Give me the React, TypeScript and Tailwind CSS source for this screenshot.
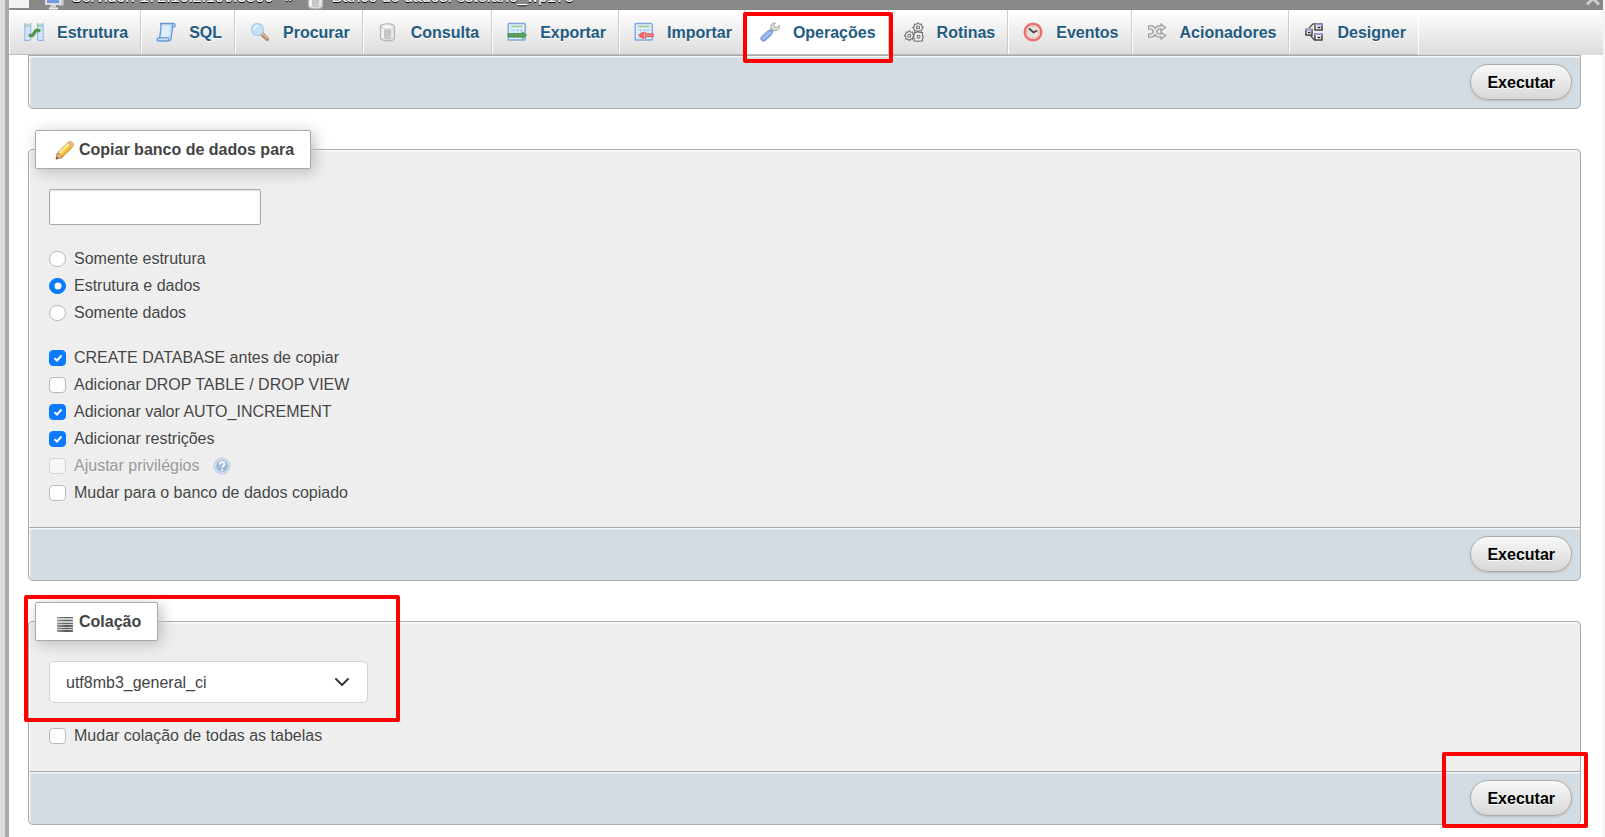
import { useState } from "react";
import type { ReactNode } from "react";

function Svg({ children, className = "h-5 w-5" }: { children: ReactNode; className?: string }) {
  return (
    <svg viewBox="0 0 20 20" className={`shrink-0 ${className}`} fill="none" aria-hidden="true">
      {children}
    </svg>
  );
}

const StructureIcon = () => (
  <Svg>
    <path d="M1 1.5h5.5v17H1zM14 1.5h5v17h-5z" fill="#c3dcf7" />
    <path d="M1 3.5h5M14 3.5h5" stroke="#9fd48e" strokeWidth="1.5" />
    <path d="M1 7h5M1 10h5M1 13h5M1 16h5M14 7h5M14 10h5M14 13h5M14 16h5" stroke="#edf5fd" />
    <path d="M.8 1v18M6.8 1v17M13.6 1v17M19.2 1v18M.8 18.5h5M14 18.5h5" stroke="#8db3e2" />
    <path d="M6 13.5h2.5L12 8.5h3" stroke="#4d9a50" strokeWidth="3.4" strokeLinecap="round" strokeLinejoin="round" />
  </Svg>
);

const SqlIcon = () => (
  <Svg>
    <path d="M4.5 1.5h13c2 0 2.2 3.5.2 3.5h-1l-1.5 10.5c-.3 2.5-1.2 3.5-2.7 3.5h-10c-2 0-1.800-3 0-3.200h1.200L5 4.500z" fill="#c6dff9" stroke="#6b9bd8" strokeWidth="1.3" />
    <path d="M6.500 4h7.500l-1.500 11H5.300z" fill="#dfeefd" />
    <path d="M2.500 15.800h10c0 1.500.4 2.600 1.500 2.600M17.500 1.700c-1.500.3-1.500 2-1 3.300" stroke="#5f8fce" />
  </Svg>
);

const SearchIcon = () => (
  <Svg>
    <path d="M11.500 11.500l5.500 5.500" stroke="#b98a63" strokeWidth="4" strokeLinecap="round" />
    <path d="M12.500 11.700l4.500 4.300" stroke="#e3bd97" strokeWidth="1.5" strokeLinecap="round" />
    <circle cx="7.5" cy="7.5" r="6" fill="#c8e1fb" stroke="#b4cdec" strokeWidth="1.5" />
    <path d="M4 7.500a3.500 3.500 0 0 1 4-3.500" stroke="#eaf4fe" strokeWidth="1.8" />
  </Svg>
);

const DatabaseIcon = () => (
  <Svg>
    <path d="M2.500 5c0-2 3-3.200 7-3.200S16.500 3 16.500 5v10.500c0 2-3 3.300-7 3.300s-7-1.300-7-3.300z" fill="#e6e6e6" stroke="#b4b4b4" strokeWidth="1.3" />
    <path d="M6 7.500h7v9.500c-2 .6-5 .6-7 0z" fill="#c6c6c6" />
    <path d="M4.500 7v9" stroke="#fafafa" strokeWidth="1.6" />
    <ellipse cx="9.5" cy="4.8" rx="6" ry="2.2" fill="#f7f7f7" stroke="#cfcfcf" strokeWidth=".8" />
  </Svg>
);

const Sheet = () => (
  <>
    <rect x="1.2" y="1.5" width="17" height="16.5" rx="1" fill="#e4effc" stroke="#80a5dc" strokeWidth="1.4" />
    <path d="M4 4.500h11.500" stroke="#8fce83" strokeWidth="1.5" />
    <path d="M3.500 8h12.500M3.500 12h12.500M3.500 15.500h12.500M6.500 7v9.500M10.500 7v9.500M14 7v9.500" stroke="#b3cdec" />
  </>
);

const ExportIcon = () => (
  <Svg>
    <Sheet />
    <path d="M1 11.500h14.500V9.800l4.300 3.500-4.300 3.500v-1.700H1z" fill="#57a055" stroke="#3c8540" strokeWidth=".6" />
  </Svg>
);

const ImportIcon = () => (
  <Svg>
    <Sheet />
    <path d="M20 11.200h-8V10H8.500L4 13.200l4.500 3.500H12v-1.600h8z" fill="#f05c5c" />
    <path d="M8 13.200h12" stroke="#f99b9b" />
    <path d="M10.500 10v6.500" stroke="#f8c4c4" strokeWidth=".8" />
  </Svg>
);

const WrenchIcon = () => (
  <Svg>
    <path d="M13 7L9.500 11" stroke="#9e9e9e" strokeWidth="4" />
    <path d="M15.500 1.200c-3-.8-5.300 1.500-4.600 4.300.6 3.200 5 4.500 7.600 1.800.9-1 1.200-2.600.7-4l-2.700 2.400-2.300-.8-.6-2z" fill="#dcdcdc" stroke="#a3a3a3" />
    <path d="M3.500 16.500l6-5.500" stroke="#7399dd" strokeWidth="6" strokeLinecap="round" />
    <path d="M3.500 16.300l6-5.500" stroke="#9fbcf0" strokeWidth="3.5" strokeLinecap="round" />
  </Svg>
);

const RoutinesIcon = () => (
  <Svg>
    <g fill="#f0f0f0" stroke="#707070" strokeWidth="1.1">
      <path d="M14 .8l1.600 1.500 2-.1.100 2L19.300 5.500l-1.600 1.400-.1 2-2-.1L14 10l-1.500-1.200-2 .1-.1-2-1.600-1.400 1.600-1.300.1-2 2 .1z" />
      <path d="M5.300 8.800l1.500 1.500 1.900-.1.100 2 1.500 1.500-1.500 1.400-.1 2-1.900-.1-1.500 1.500-1.500-1.500-1.900.1-.1-2L.4 13.700l1.500-1.500.1-2 1.800.1z" />
      <path d="M10.500 10.500h2l1.500-1 1.500 1h3v3l.9 1.300-.9 1.400v2.800h-3l-1.500.6-1.500-.6h-2.300v-2.800l-.8-1.400.8-1.300z" />
    </g>
    <g fill="#fff" stroke="#666" strokeWidth="1.1">
      <circle cx="14" cy="5.5" r="1.5" />
      <circle cx="5.3" cy="13.7" r="1.5" />
      <circle cx="14.5" cy="14.8" r="1.5" />
    </g>
  </Svg>
);

const EventsIcon = () => (
  <Svg>
    <circle cx="10" cy="10" r="8.3" fill="#e5e3dc" stroke="#ea6f6f" strokeWidth="2.4" />
    <circle cx="10" cy="10" r="6.5" stroke="#f7c2c2" />
    <path d="M6 6.500l4.500 4 3.500-2" stroke="#444" strokeWidth="1.8" />
    <path d="M10 4v1M10 15v1M4 10h1M15 10h1" stroke="#999" />
  </Svg>
);

const TriggersIcon = () => (
  <Svg>
    <g stroke="#9a9d9a" strokeWidth="4.4">
      <path d="M1 5.500h3.500c4 0 3 8 7.500 8h3" />
      <path d="M1 13.500h3.500c4 0 3-8 7.500-8h3" />
    </g>
    <path d="M14 2l4.500 3.500L14 9zM14 10l4.500 3.500L14 17z" fill="#eee" stroke="#9a9d9a" strokeWidth="1.2" />
    <g stroke="#e6e6e6" strokeWidth="1.8">
      <path d="M2 5.500h2.500c4 0 3 8 7.500 8h4" />
      <path d="M2 13.500h2.500c4 0 3-8 7.500-8h4" />
    </g>
  </Svg>
);

const DesignerIcon = () => (
  <Svg>
    <path d="M5 6l4-4h3M6 13l4 4.500h2" stroke="#555" strokeWidth="1.3" />
    <g fill="#fff" stroke="#444" strokeWidth="1.5">
      <path d="M11 2h7v6h-7zM2 7.500h6v5.500H2zM11 12h7v6h-7z" />
    </g>
    <path d="M10.500 1.500h8v2h-8zM1.300 6.500h7v2h-7zM10.500 11h8v2h-8z" fill="#9c9cda" />
    <path d="M13.500 5.500h3M4 10.500h2.500M13.500 15.500h3" stroke="#222" strokeWidth="1.5" />
  </Svg>
);

const PencilIcon = () => (
  <Svg>
    <path d="M1 19l1.500-6L13.500 2c2-1.800 6.500 2 4.500 4.500L7 17.500z" fill="#f7d046" stroke="#c08a3c" />
    <path d="M4 13.500L14 3.500" stroke="#fff0a3" strokeWidth="2" />
    <path d="M6.500 16.500L16.800 6.500" stroke="#e9a92c" strokeWidth="1.6" />
    <path d="M12.500 3l1.300-1.300c2-1.200 6 2.300 4.600 4.600L17 7.500z" fill="#eab58a" />
    <path d="M1 19l1.500-6c2 .3 4 2.300 4.500 4.500z" fill="#e5b98c" stroke="#b57b45" strokeWidth=".8" />
    <path d="M1 19l.7-2.500 1.800 1.800z" fill="#6b4a2c" />
  </Svg>
);

const CollationIcon = () => (
  <Svg>
    <defs>
      <linearGradient id="rule" x1="2" x2="18" y1="0" y2="0" gradientUnits="userSpaceOnUse">
        <stop stopColor="#999" />
        <stop offset=".6" stopColor="#555" />
        <stop offset="1" stopColor="#777" />
      </linearGradient>
    </defs>
    <path d="M2 5h16v15H2z" fill="#ccc" />
    <path d="M2 5h16v1H2zM2 8h16v1H2zM2 11h16v1H2zM2 13h16v2H2zM2 16h16v1H2zM2 18h16v2H2z" fill="url(#rule)" />
  </Svg>
);

const ServerIcon = () => (
  <Svg>
    <path d="M13 6h6v10h-6z" fill="#c9cdd2" stroke="#888" />
    <rect x="1" y="3" width="14" height="11" fill="#6f9be0" stroke="#dcdcdc" strokeWidth="2" />
    <path d="M6 15h5v2.500H5z" fill="#d2d2d2" />
    <path d="M4 18.500h9" stroke="#e8e8e8" strokeWidth="2" />
  </Svg>
);

const HelpIcon = () => (
  <Svg className="h-[18px] w-[18px]">
    <circle cx="10" cy="10" r="9" fill="#cfdcec" stroke="#bccde2" />
    <circle cx="10" cy="10" r="6.5" fill="#9db8d8" />
    <path d="M7.500 8.200c0-3.400 5.200-3.200 5.200-.2 0 2-2.500 1.700-2.500 4M10.200 13.500v1.800" stroke="#fff" strokeWidth="2" />
  </Svg>
);

const tabs = [
  { label: "Estrutura", icon: <StructureIcon /> },
  { label: "SQL", icon: <SqlIcon /> },
  { label: "Procurar", icon: <SearchIcon /> },
  { label: "Consulta", icon: <DatabaseIcon /> },
  { label: "Exportar", icon: <ExportIcon /> },
  { label: "Importar", icon: <ImportIcon /> },
  { label: "Operações", icon: <WrenchIcon />, active: true },
  { label: "Rotinas", icon: <RoutinesIcon /> },
  { label: "Eventos", icon: <EventsIcon /> },
  { label: "Acionadores", icon: <TriggersIcon /> },
  { label: "Designer", icon: <DesignerIcon /> },
];

function Frame({ className }: { className: string }) {
  return <span aria-hidden="true" className={`pointer-events-none absolute z-10 rounded-xs border-4 border-[#ff0000] ${className}`} />;
}

function Footer({ framed = false }: { framed?: boolean }) {
  return (
    <div className="flex justify-end rounded-b-[5px] border border-[#aaa] bg-[#d3dce3] p-2 shadow-[inset_1px_1px_2px_#fff]">
      <div className="relative">
        <button
          type="submit"
          className="h-9 rounded-full border border-[#aaa] bg-linear-to-b from-[#f8f8f8] to-[#d8d8d8] px-4 font-bold text-black shadow-[0_1px_2px_#bbb] [text-shadow:0_1px_0_#fff]"
        >
          Executar
        </button>
        {framed && <Frame className="-top-7 -right-4 -bottom-3 -left-7" />}
      </div>
    </div>
  );
}

function Option({
  type,
  name,
  label,
  checked = false,
  disabled = false,
}: {
  type: "radio" | "checkbox";
  name: string;
  label: string;
  checked?: boolean;
  disabled?: boolean;
}) {
  const shape = type === "radio" ? "rounded-full" : "rounded-sm";
  return (
    <label className={`flex items-center gap-2 [text-shadow:0_1px_0_#fff] ${disabled ? "opacity-50" : ""}`}>
      <span className="grid place-items-center">
        <input
          type={type}
          name={name}
          defaultChecked={checked}
          disabled={disabled}
          className={`peer col-start-1 row-start-1 h-4 w-[17px] appearance-none border border-[#b9b9b9] bg-white checked:border-[#0a7aff] checked:bg-[#0a7aff] ${shape}`}
        />
        <svg viewBox="0 0 16 16" aria-hidden="true" className="pointer-events-none invisible col-start-1 row-start-1 h-4 w-4 peer-checked:visible" fill="none">
          {type === "radio" ? (
            <circle cx="8" cy="8" r="3.5" fill="#fff" />
          ) : (
            <path d="M4.500 8.200l2.500 2.300 4.500-5" stroke="#fff" strokeWidth="2" />
          )}
        </svg>
      </span>
      {label}
    </label>
  );
}

function Panel({ title, icon, children }: { title: string; icon: ReactNode; children: ReactNode }) {
  return (
    <fieldset className="min-w-0 rounded-t-[5px] border border-b-0 border-[#aaa] bg-[#eee] shadow-[inset_1px_1px_2px_#fff]">
      <legend className="ml-[6px] rounded-xs border border-[#aaa] bg-white shadow-[3px_3px_15px_#bbb]">
        <span className="flex h-[37px] items-center gap-1 pr-4 pl-[19px] font-bold">
          {icon}
          {title}
        </span>
      </legend>
      <div className="px-5 pt-5">{children}</div>
    </fieldset>
  );
}

export default function App() {
  const [collation, setCollation] = useState("utf8mb3_general_ci");
  return (
    <div className="flex min-h-screen bg-white font-['Liberation_Sans',Arial,sans-serif] text-base leading-[27px] text-[#444]">
      <aside className="w-[9px] shrink-0 border-r-4 border-[#aaa] bg-[#dcdde0]" />
      <div className="min-w-0 flex-1 border-r-2 border-[#f3f3f3]">
        <header className="flex h-[10px] items-end overflow-hidden bg-[#888] pb-1 leading-[18px] text-white [text-shadow:0_1px_0_#000]">
          <span className="-mb-0.5 h-6 w-5 shrink-0 bg-[#f3f3f3]" />
          <nav aria-label="Navegação" className="ml-4 flex flex-1 items-end gap-[6px]">
            <span className="-mb-1"><ServerIcon /></span>
            <a href="#servidor">Servidor: 172.16.2.100:3306</a>
            <span className="mx-[6px]">»</span>
            <span className="-mb-1"><DatabaseIcon /></span>
            <a href="#banco">Banco de dados: estefano_wp175</a>
          </nav>
          <svg viewBox="0 0 16 16" className="mr-0.5 h-4 w-4 shrink-0" fill="none" aria-hidden="true">
            <path d="M2 14.500l6-6 6 6" stroke="#ccc" strokeWidth="3" />
          </svg>
        </header>

        <nav aria-label="Abas" className="bg-linear-to-b from-white to-[#dcdcdc]">
          <ul className="flex">
            {tabs.map((tab) => (
              <li key={tab.label} className="group relative">
                <a
                  href={`#${tab.label}`}
                  className={`flex h-[45px] items-center gap-[13px] border-r border-b border-r-[#ccc] border-b-[#bbb] pr-3 pl-[15px] font-bold text-[#235a81] group-last:border-r-white [text-shadow:0_1px_0_#fff] ${
                    tab.active ? "bg-white" : "shadow-[inset_1px_0_0_#fff]"
                  }`}
                >
                  {tab.icon}
                  {tab.label}
                </a>
                {tab.active && <Frame className="top-0.5 -right-1 -bottom-2 -left-0.5" />}
              </li>
            ))}
          </ul>
        </nav>

        <main className="mr-[22px] ml-[19px]">
          <form onSubmit={(e) => e.preventDefault()}>
            <Footer />
          </form>

          <form className="mt-[21px]" onSubmit={(e) => e.preventDefault()}>
            <Panel title="Copiar banco de dados para" icon={<PencilIcon />}>
              <input
                type="text"
                aria-label="Copiar banco de dados para"
                className="block h-9 w-[212px] rounded-xs border border-[#aaa] bg-white px-2 shadow-[inset_0_1px_2px_#ddd]"
              />
              <div className="pt-5">
                <Option type="radio" name="what" label="Somente estrutura" />
                <Option type="radio" name="what" label="Estrutura e dados" checked />
                <Option type="radio" name="what" label="Somente dados" />
              </div>
              <div className="pt-[18px] pb-[21px]">
                <Option type="checkbox" name="create" label="CREATE DATABASE antes de copiar" checked />
                <Option type="checkbox" name="drop" label="Adicionar DROP TABLE / DROP VIEW" />
                <Option type="checkbox" name="increment" label="Adicionar valor AUTO_INCREMENT" checked />
                <Option type="checkbox" name="constraints" label="Adicionar restrições" checked />
                <div className="flex items-center gap-[14px]">
                  <Option type="checkbox" name="privileges" label="Ajustar privilégios" disabled />
                  <HelpIcon />
                </div>
                <Option type="checkbox" name="switch" label="Mudar para o banco de dados copiado" />
              </div>
            </Panel>
            <Footer />
          </form>

          <form className="relative mt-[21px]" onSubmit={(e) => e.preventDefault()}>
            <Panel title="Colação" icon={<CollationIcon />}>
              <div className="grid w-[319px] items-center">
                <select
                  aria-label="Colação"
                  value={collation}
                  onChange={(e) => setCollation(e.target.value)}
                  className="col-start-1 row-start-1 h-[42px] appearance-none rounded-[5px] border border-[#ced4da] bg-white pr-12 pl-4"
                >
                  <option>utf8mb3_general_ci</option>
                  <option>utf8mb4_general_ci</option>
                </select>
                <svg viewBox="0 0 16 16" aria-hidden="true" className="pointer-events-none col-start-1 row-start-1 mr-[18px] h-4 w-4 justify-self-end" fill="none">
                  <path d="M2 5l6 6 6-6" stroke="#343a40" strokeWidth="2" strokeLinecap="round" strokeLinejoin="round" />
                </svg>
              </div>
              <div className="pt-[19px] pb-[22px]">
                <Option type="checkbox" name="all" label="Mudar colação de todas as tabelas" />
              </div>
            </Panel>
            <Footer framed />
            <Frame className="-top-[7px] -left-1 h-[127px] w-[376px]" />
          </form>
        </main>
      </div>
    </div>
  );
}
